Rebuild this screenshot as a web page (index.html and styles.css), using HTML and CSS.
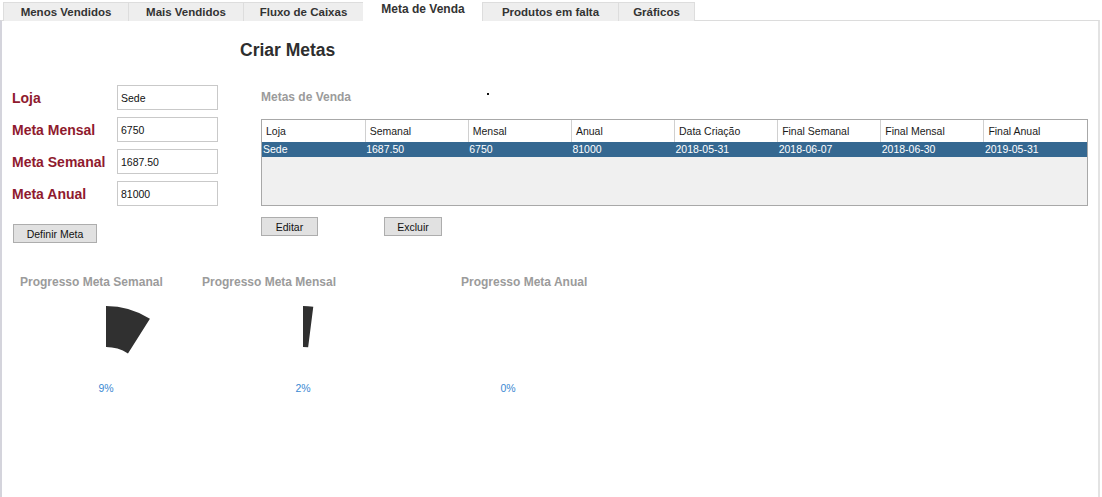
FILE: index.html
```html
<!DOCTYPE html>
<html lang="pt">
<head>
<meta charset="utf-8">
<title>Meta de Venda</title>
<link rel="stylesheet" href="styles.css">
</head>
<body>
<nav class="tabs">
  <span class="tab">Menos Vendidos</span>
  <span class="tab">Mais Vendidos</span>
  <span class="tab">Fluxo de Caixas</span>
  <span class="tab tab-active">Meta de Venda</span>
  <span class="tab">Produtos em falta</span>
  <span class="tab">Gráficos</span>
</nav>
<main class="panel">
  <h1 class="page-title">Criar Metas</h1>
  <section class="main-row">
    <form class="goal-form">
      <div class="form-row"><label class="form-label">Loja</label><input class="form-input" value="Sede"></div>
      <div class="form-row"><label class="form-label">Meta Mensal</label><input class="form-input" value="6750"></div>
      <div class="form-row"><label class="form-label">Meta Semanal</label><input class="form-input" value="1687.50"></div>
      <div class="form-row"><label class="form-label">Meta Anual</label><input class="form-input" value="81000"></div>
      <button type="button" class="btn btn-define">Definir Meta</button>
    </form>
    <div class="goals">
      <div class="goals-head"><h2 class="section-title">Metas de Venda</h2><span class="dot"></span></div>
      <div class="table-box">
        <table class="grid">
          <thead>
            <tr><th>Loja</th><th>Semanal</th><th>Mensal</th><th>Anual</th><th>Data Criação</th><th>Final Semanal</th><th>Final Mensal</th><th>Final Anual</th></tr>
          </thead>
          <tbody>
            <tr class="selected"><td>Sede</td><td>1687.50</td><td>6750</td><td>81000</td><td>2018-05-31</td><td>2018-06-07</td><td>2018-06-30</td><td>2019-05-31</td></tr>
          </tbody>
        </table>
      </div>
      <div class="table-actions">
        <button type="button" class="btn btn-edit">Editar</button>
        <button type="button" class="btn btn-delete">Excluir</button>
      </div>
    </div>
  </section>
  <section class="progress">
    <div class="progress-titles">
      <h3 class="progress-title">Progresso Meta Semanal</h3>
      <h3 class="progress-title">Progresso Meta Mensal</h3>
      <h3 class="progress-title">Progresso Meta Anual</h3>
    </div>
    <div class="gauges">
      <div class="gauge">
        <svg width="170" height="170" viewBox="0 0 170 170"><path d="M85 3 A82 82 0 0 1 128.94 15.77 L106.97 50.38 A41 41 0 0 0 85 44 Z" fill="#303030"/></svg>
        <span class="gauge-value">9%</span>
      </div>
      <div class="gauge">
        <svg width="170" height="170" viewBox="0 0 170 170"><path d="M85 3 A82 82 0 0 1 95.28 3.65 L90.14 44.32 A41 41 0 0 0 85 44 Z" fill="#303030"/></svg>
        <span class="gauge-value">2%</span>
      </div>
      <div class="gauge">
        <svg width="170" height="170" viewBox="0 0 170 170"></svg>
        <span class="gauge-value">0%</span>
      </div>
    </div>
  </section>
</main>
</body>
</html>
```

FILE: styles.css
```css
* { box-sizing: border-box; }

html, body {
  margin: 0;
  background: #ffffff;
  font-family: "Liberation Sans", Arial, sans-serif;
  color: #222;
}

.tabs {
  display: flex;
  align-items: flex-end;
  height: 21px;
  padding-left: 3px;
  margin-bottom: -1px;
  position: relative;
  z-index: 1;
}

.tab {
  display: flex;
  align-items: center;
  justify-content: center;
  height: 19px;
  padding: 0 10px 1px;
  background: #eeeeee;
  border: 1px solid #dddddd;
  border-bottom: none;
  margin-right: -1px;
  font-size: 11.5px;
  font-weight: bold;
  color: #333;
  white-space: nowrap;
}

.tab:nth-child(1) { width: 126px; }
.tab:nth-child(2) { width: 116px; }
.tab:nth-child(3) { width: 121px; }
.tab:nth-child(4) { width: 120px; }
.tab:nth-child(5) { width: 137px; }
.tab:nth-child(6) { width: 77px; }

.tab-active {
  height: 21px;
  background: #ffffff;
  border-color: #ffffff;
  padding-bottom: 4px;
  font-size: 12px;
}

.panel {
  width: 1100px;
  min-height: 480px;
  border-top: 1px solid #dcdcdc;
  border-left: 2px solid #d4d4dc;
  border-right: 2px solid #e3e3e3;
}

.page-title {
  margin: 0;
  padding: 19px 0 0 238px;
  height: 64px;
  font-size: 17.5px;
  line-height: 20px;
  font-weight: bold;
  color: #2e2e2e;
}

.main-row {
  display: flex;
}

.goal-form {
  width: 259px;
  padding-left: 10px;
  display: flex;
  flex-direction: column;
  gap: 7px;
  margin: 0;
}

.form-row {
  display: flex;
  align-items: center;
  height: 25px;
}

.form-label {
  width: 105px;
  font-size: 14px;
  font-weight: bold;
  color: #8f1a2e;
  padding-top: 1px;
}

.form-input {
  width: 101px;
  height: 25px;
  border: 1px solid #c9c9c9;
  padding: 0 3px;
  font-family: "Liberation Sans", Arial, sans-serif;
  font-size: 10.5px;
  color: #111;
  background: #fff;
}

.btn {
  height: 19px;
  background: #e1e1e1;
  border: 1px solid #adadad;
  border-radius: 0;
  padding: 0;
  font-family: "Liberation Sans", Arial, sans-serif;
  font-size: 10.5px;
  color: #111;
}

.btn-define {
  width: 84px;
  margin-top: 11px;
  margin-left: 1px;
}

.goals {
  display: flex;
  flex-direction: column;
  padding-top: 5px;
}

.goals-head {
  display: flex;
  align-items: flex-start;
  height: 29px;
}

.section-title {
  margin: 0;
  font-size: 12px;
  line-height: 15px;
  font-weight: bold;
  color: #9b9b9b;
}

.dot {
  width: 2px;
  height: 2px;
  background: #111;
  margin-left: 136px;
  margin-top: 3px;
}

.table-box {
  width: 827px;
  height: 87px;
  border: 1px solid #a8a8a8;
  background: #f0f0f0;
}

.grid {
  width: 100%;
  table-layout: fixed;
  border-collapse: collapse;
  font-size: 10.5px;
}

.grid th {
  height: 22px;
  background: #ffffff;
  border-right: 1px solid #d0d0d0;
  text-align: left;
  font-weight: normal;
  color: #1a1a1a;
  padding: 0 4px;
}

.grid th:last-child { border-right: none; }

.grid td {
  height: 15px;
  padding: 0 2px 1px 1px;
  color: #ffffff;
  line-height: 14px;
}

.grid .selected td { background: #356891; }

.table-actions {
  display: flex;
  gap: 66px;
  margin-top: 11px;
}

.btn-edit { width: 57px; }
.btn-delete { width: 58px; }

.progress {
  margin-top: 32px;
}

.progress-titles {
  display: grid;
  grid-template-columns: 182px 259px auto;
  padding-left: 18px;
}

.progress-title {
  margin: 0;
  font-size: 12px;
  line-height: 15px;
  font-weight: bold;
  color: #9b9b9b;
  white-space: nowrap;
}

.gauges {
  display: grid;
  grid-template-columns: 197px 205px 170px;
  padding-left: 19px;
  margin-top: 13px;
}

.gauge {
  position: relative;
  width: 170px;
  height: 170px;
}

.gauge svg { display: block; }

.gauge-value {
  position: absolute;
  left: 0;
  right: 0;
  top: 78px;
  text-align: center;
  font-size: 10.5px;
  line-height: 14px;
  color: #3a89d2;
}
```
